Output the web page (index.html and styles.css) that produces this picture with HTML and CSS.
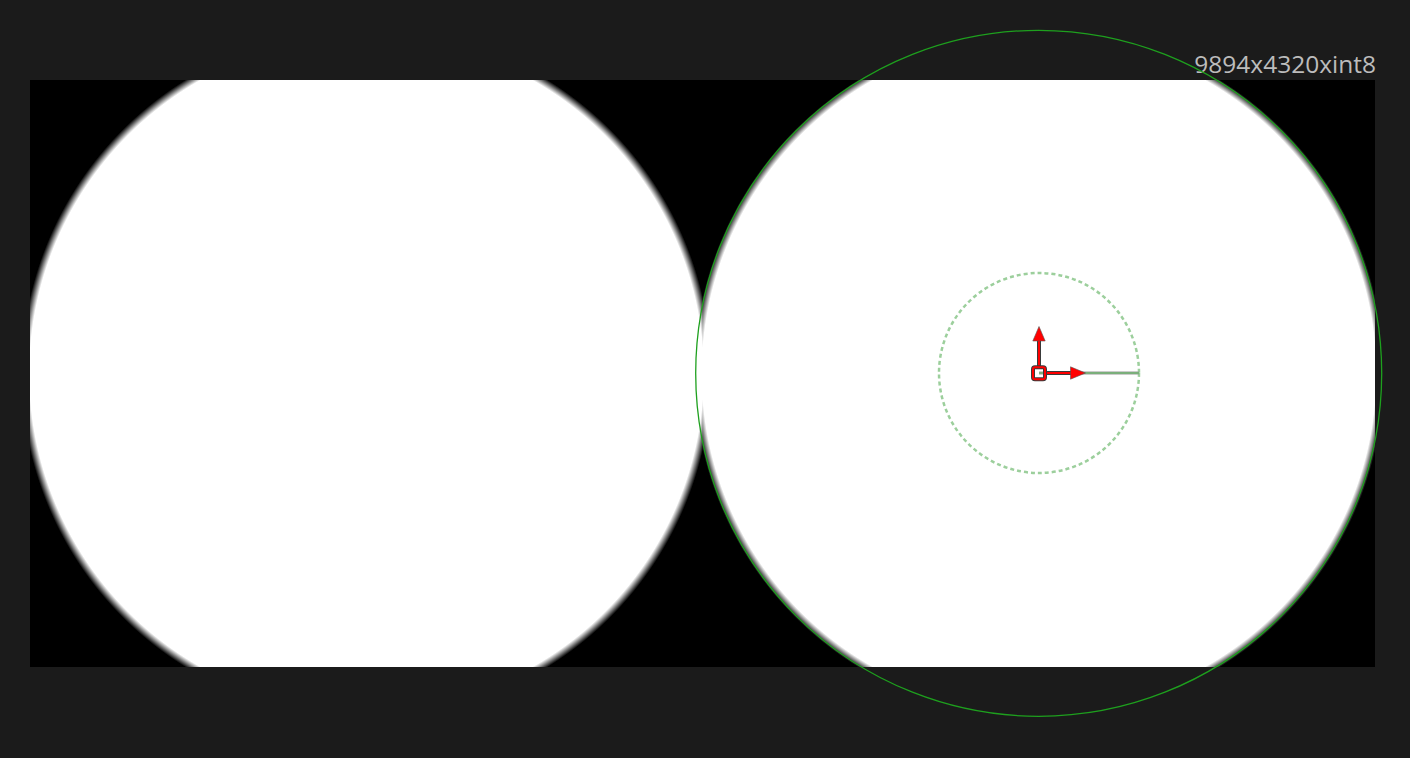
FILE: index.html
```html
<!DOCTYPE html>
<html>
<head>
<meta charset="utf-8">
<title>Viewer</title>
<link rel="stylesheet" href="styles.css">
</head>
<body>
<div class="viewer">
  <div class="header"><span class="label">9894x4320xint8</span></div>
  <div class="image">
    <div class="half"></div>
    <div class="half"></div>
  </div>
  <svg class="overlay" viewBox="0 0 1410 758" width="1410" height="758">
    <circle cx="1038.7" cy="373.3" r="343" fill="none" stroke="#1ea01e" stroke-width="1.3"/>
    <circle cx="1039" cy="373" r="100" fill="none" stroke="#9ccf9c" stroke-width="2.5" stroke-dasharray="4 3"/>
    <line x1="1039" y1="373" x2="1139" y2="373" stroke="#9a9a9a" stroke-width="3"/>
    <line x1="1039" y1="373" x2="1139" y2="373" stroke="#5cc45c" stroke-width="1"/>
    <line x1="1039" y1="366" x2="1039" y2="339" stroke="#3a3a3a" stroke-width="4"/>
    <line x1="1039" y1="366" x2="1039" y2="339" stroke="#ff0000" stroke-width="2"/>
    <polygon points="1039,326.5 1032.8,341 1045.2,341" fill="#ff0000" stroke="#555" stroke-width="0.6" stroke-linejoin="round"/>
    <line x1="1046" y1="373" x2="1072" y2="373" stroke="#3a3a3a" stroke-width="4"/>
    <line x1="1046" y1="373" x2="1072" y2="373" stroke="#ff0000" stroke-width="2"/>
    <polygon points="1085.5,373 1070.5,366.8 1070.5,379.2" fill="#ff0000" stroke="#555" stroke-width="0.6" stroke-linejoin="round"/>
    <rect x="1033" y="367.3" width="12" height="12" rx="2" fill="none" stroke="#3a3a3a" stroke-width="4"/>
    <rect x="1033" y="367.3" width="12" height="12" rx="2" fill="none" stroke="#ff0000" stroke-width="2"/>
  </svg>
</div>
</body>
</html>
```
FILE: styles.css
```css
html, body {
  margin: 0;
  padding: 0;
  background: #1b1b1b;
}

.viewer {
  position: relative;
  width: 1410px;
  height: 758px;
  box-sizing: border-box;
  padding: 0 35px 0 30px;
  display: flex;
  flex-direction: column;
  overflow: hidden;
}

.header {
  height: 80px;
  box-sizing: border-box;
  display: flex;
  justify-content: flex-end;
  align-items: flex-end;
  padding-bottom: 4px;
  margin-right: -1px;
}

.label {
  font-family: "Open Sans", "Noto Sans", sans-serif;
  font-size: 24.5px;
  line-height: 1;
  color: #bcbcbc;
  white-space: nowrap;
}

.image {
  width: 1345px;
  height: 587px;
  background: #000;
  display: grid;
  grid-template-columns: 1fr 1fr;
}

.half {
  background: radial-gradient(circle at 50% 50%, #fff 337px, #000 345px);
}

.overlay {
  position: absolute;
  left: 0;
  top: 0;
  pointer-events: none;
}
```
